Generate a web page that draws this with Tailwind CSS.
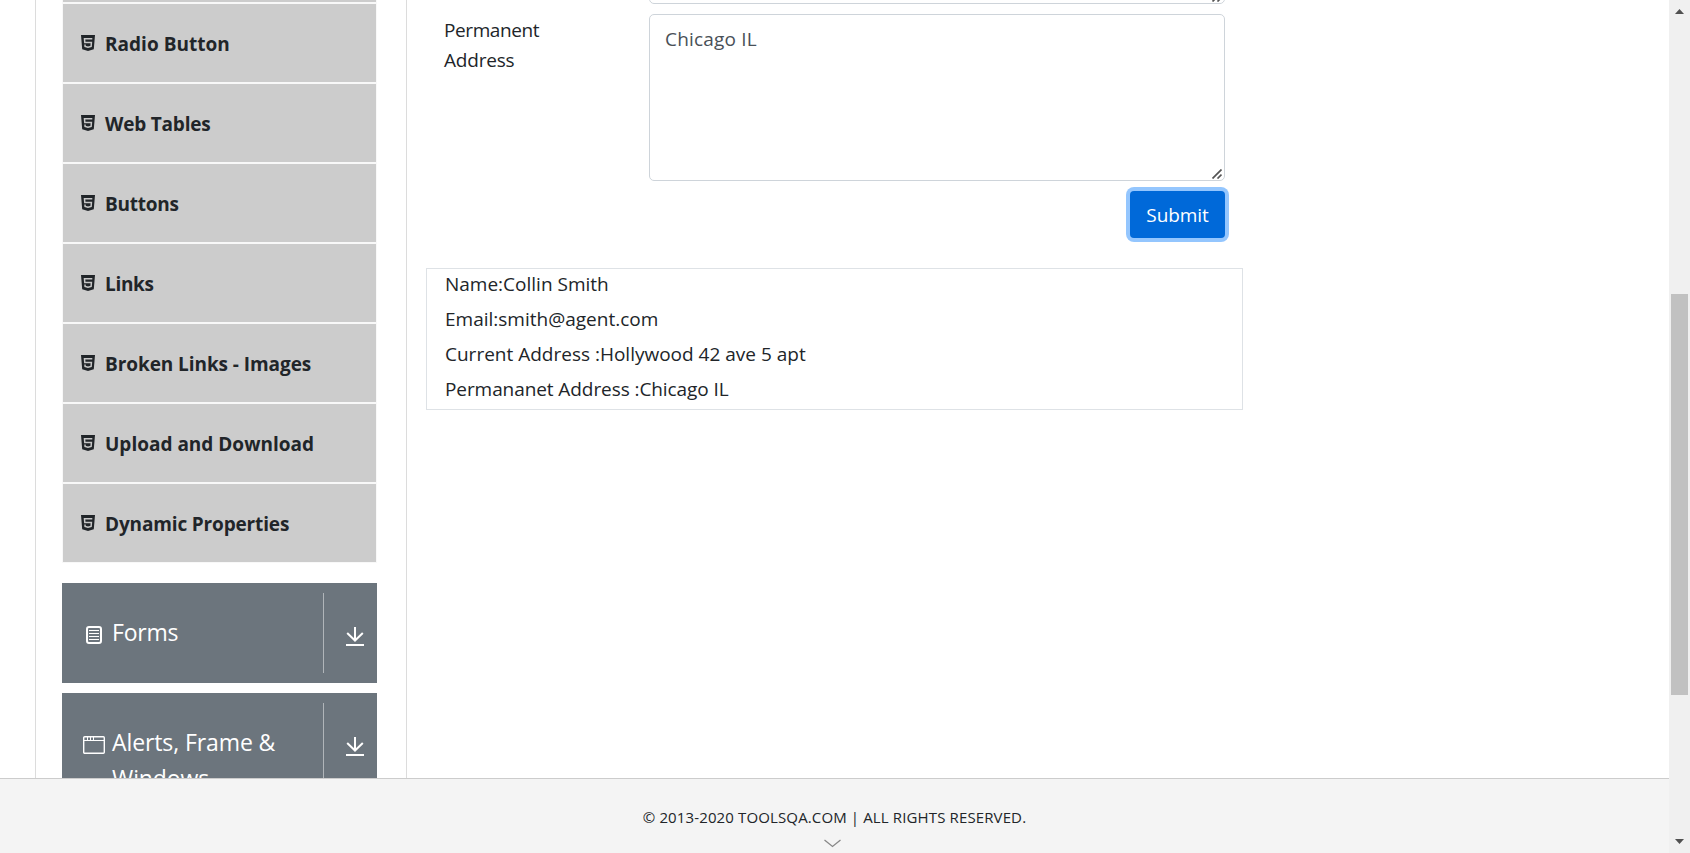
<!DOCTYPE html>
<html lang="en">
<head>
<meta charset="utf-8">
<title>Text Box</title>
<script src="https://cdn.jsdelivr.net/npm/@tailwindcss/browser@4"></script>
</head>
<body class="flex h-[853px] overflow-hidden bg-white font-['Open_Sans',sans-serif] text-[19px] leading-[30px] text-[#212529]">
<svg class="hidden">
  <symbol id="html5" viewBox="0 0 14 16"><path fill="currentColor" d="M0 0h14l-1.200 14.200L7 16l-5.800-1.800z"/><path fill="none" stroke="#c8c8c8" stroke-width="1.500" d="M11.300 3.700H3.500l.3 3.800h6.600l-.3 3.900L7 12.300l-2.900-.9-.1-1.900"/></symbol>
  <symbol id="down" viewBox="0 0 18 20"><path fill="none" stroke="currentColor" stroke-width="2" d="M9 0v13.500M1.200 6 9 13.500 16.800 6M0 18h18"/></symbol>
  <symbol id="grip" viewBox="0 0 10 10"><path fill="none" stroke="#555" stroke-width="1.700" d="M.5 9.500 9.500.5M5.500 9.500 9.500 5.500"/></symbol>
</svg>
<div class="flex w-[1669px] shrink-0 flex-col">
  <main class="flex h-[778px] shrink-0 overflow-hidden pl-[35px]">
    <aside class="flex w-[372px] shrink-0 flex-col border-x border-[#dcdcdc] px-[26px]">
      <ul class="flex h-[563px] w-[315px] shrink-0 flex-col justify-end overflow-hidden font-bold">
        <li class="h-20 shrink-0 border border-[#f8f8f8] bg-[#ccc]"></li>
        <li class="flex h-20 shrink-0 items-start gap-[10px] border border-[#f8f8f8] bg-[#ccc] pt-[25px] pl-[18px]"><svg class="mt-[6px] h-4 w-[14px]"><use href="#html5"/></svg><span class="tracking-[0.02px]">Radio Button</span></li>
        <li class="flex h-20 shrink-0 items-start gap-[10px] border border-[#f8f8f8] bg-[#ccc] pt-[25px] pl-[18px]"><svg class="mt-[6px] h-4 w-[14px]"><use href="#html5"/></svg><span class="tracking-[-0.2px]">Web Tables</span></li>
        <li class="flex h-20 shrink-0 items-start gap-[10px] border border-[#f8f8f8] bg-[#ccc] pt-[25px] pl-[18px]"><svg class="mt-[6px] h-4 w-[14px]"><use href="#html5"/></svg><span class="tracking-[-0.25px]">Buttons</span></li>
        <li class="flex h-20 shrink-0 items-start gap-[10px] border border-[#f8f8f8] bg-[#ccc] pt-[25px] pl-[18px]"><svg class="mt-[6px] h-4 w-[14px]"><use href="#html5"/></svg><span class="tracking-[-0.3px]">Links</span></li>
        <li class="flex h-20 shrink-0 items-start gap-[10px] border border-[#f8f8f8] bg-[#ccc] pt-[25px] pl-[18px]"><svg class="mt-[6px] h-4 w-[14px]"><use href="#html5"/></svg><span class="tracking-[-0.07px]">Broken Links - Images</span></li>
        <li class="flex h-20 shrink-0 items-start gap-[10px] border border-[#f8f8f8] bg-[#ccc] pt-[25px] pl-[18px]"><svg class="mt-[6px] h-4 w-[14px]"><use href="#html5"/></svg><span class="tracking-[0px]">Upload and Download</span></li>
        <li class="flex h-20 shrink-0 items-start gap-[10px] border border-[#f8f8f8] bg-[#ccc] pt-[25px] pl-[18px]"><svg class="mt-[6px] h-4 w-[14px]"><use href="#html5"/></svg><span class="tracking-[-0.15px]">Dynamic Properties</span></li>
      </ul>
      <div class="mt-5 flex h-[100px] w-[315px] shrink-0 bg-[#6c757d] py-[10px] pl-[21px] text-[23px] leading-9 text-white">
        <svg class="mt-[32px] h-[20px] w-[22px] shrink-0" viewBox="0 0 22 20" fill="none" stroke="currentColor"><rect x="4" y="2" width="14" height="16" rx="2" stroke-width="2"/><path d="M6 5.500h10M6 8.500h10M6 11.500h10M6 14.500h10"/></svg>
        <span class="mt-[21px] ml-[7px] w-[211px] tracking-[-0.2px]">Forms</span>
        <div class="flex h-20 flex-1 border-l border-[#b0b5b9] pl-[22px] pt-[34px]"><svg class="h-5 w-[18px]"><use href="#down"/></svg></div>
      </div>
      <div class="mt-[10px] flex h-[136px] w-[315px] shrink-0 bg-[#6c757d] py-[10px] pl-[21px] text-[23px] leading-9 text-white">
        <svg class="mt-[32px] h-[20px] w-[22px] shrink-0" viewBox="0 0 22 20" fill="none" stroke="currentColor"><rect x=".7" y="1.700" width="20.600" height="16.600" rx="1" stroke-width="1.400"/><path d="M1 5.500h20M4.500 2v3M7.500 2v3M10.500 2v3"/></svg>
        <span class="mt-[21px] ml-[7px] w-[211px] tracking-[-0.1px]">Alerts, Frame &amp;<br>Windows</span>
        <div class="flex h-[116px] flex-1 border-l border-[#b0b5b9] pl-[22px] pt-[34px]"><svg class="h-5 w-[18px]"><use href="#down"/></svg></div>
      </div>
    </aside>
    <section class="ml-[19px] flex w-[817px] shrink-0 flex-col">
      <div class="flex h-1 shrink-0 items-end overflow-hidden pl-[223px]">
        <div class="relative shrink-0"><textarea aria-label="Current Address" class="block h-[167px] w-[576px] resize-none rounded-[5px] border border-[#ced4da]"></textarea><svg class="absolute right-[3px] bottom-[2px] size-[10px]"><use href="#grip"/></svg></div>
      </div>
      <div class="mt-[10px] flex shrink-0 pl-[18px]">
        <label class="mt-px w-[205px]"><span class="tracking-[-0.4px]">Permanent</span><br><span class="tracking-[-0.2px]">Address</span></label>
        <div class="relative"><textarea class="block h-[167px] w-[576px] resize-none rounded-[5px] border border-[#ced4da] px-[15px] py-[9px] tracking-[0.2px] text-[#495057]">Chicago IL</textarea><svg class="absolute right-[3px] bottom-[2px] size-[10px]"><use href="#grip"/></svg></div>
      </div>
      <button class="mt-[10px] ml-[704px] h-[47px] w-[95px] rounded-[4px] bg-[#0069d9] pt-px tracking-[-0.1px] text-white ring-4 ring-[#94c6fe]">Submit</button>
      <div class="mt-[30px] flex h-[142px] flex-col gap-[5px] border border-[#dee2e6] pl-[18px]">
        <p>Name:Collin Smith</p>
        <p>Email:smith@agent.com</p>
        <p>Current Address :Hollywood 42 ave 5 apt</p>
        <p class="tracking-[-0.08px]">Permananet Address :Chicago IL</p>
      </div>
    </section>
  </main>
  <footer class="flex h-[75px] flex-col items-center border-t border-[#ccc] bg-[#f4f4f4] pt-[23px] text-[15px]">
    <span class="tracking-[0.13px]">© 2013-2020 TOOLSQA.COM | ALL RIGHTS RESERVED.</span>
    <svg class="mt-[7px] ml-[-4px] h-[9px] w-[17px]" viewBox="0 0 17 9" fill="none" stroke="#888" stroke-width="1.300"><path d="M.5 1 8.500 7.500 16.500 1"/></svg>
  </footer>
</div>
<div class="flex w-[21px] flex-col items-center bg-[#f0f0f0] pt-[9px]">
  <svg class="h-[5px] w-[9px] shrink-0" viewBox="0 0 9 5" fill="#505050"><path d="M0 5 4.500 0 9 5z"/></svg>
  <div class="mt-[280px] mr-px h-[401px] w-[17px] shrink-0 bg-[#c1c1c1]"></div>
  <svg class="mt-[144px] h-[5px] w-[9px] shrink-0" viewBox="0 0 9 5" fill="#505050"><path d="M0 0 4.500 5 9 0z"/></svg>
</div>
</body>
</html>
